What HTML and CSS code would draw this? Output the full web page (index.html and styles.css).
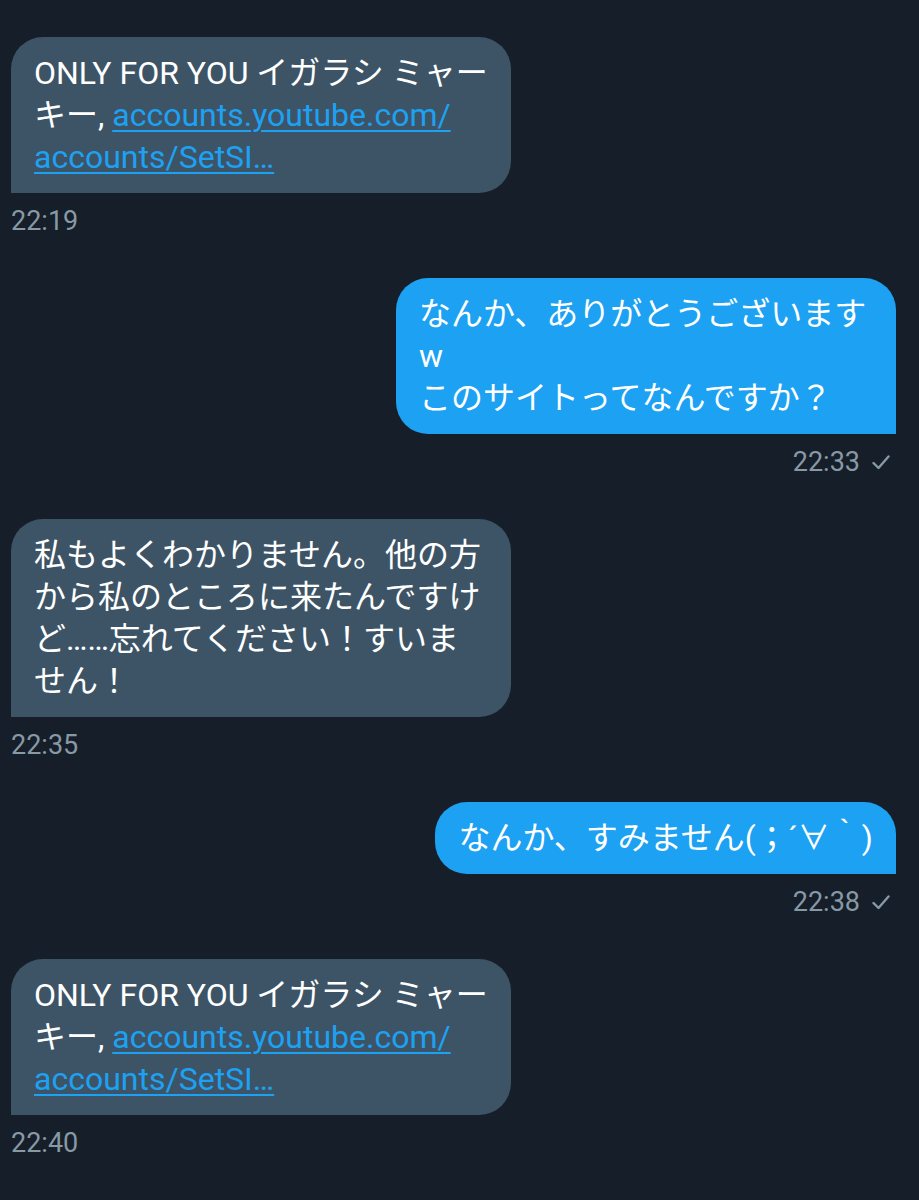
FILE: index.html
```html
<!DOCTYPE html>
<html lang="ja">
<head>
<meta charset="utf-8">
<link rel="stylesheet" href="styles.css">
</head>
<body>
<div class="chat">
  <div class="msg in">
    <div class="bubble">ONLY FOR YOU イガラシ ミャーキー, <a href="#">accounts.youtube.com/<wbr>accounts/SetSI…</a></div>
    <div class="meta">22:19</div>
  </div>
  <div class="msg out">
    <div class="bubble">なんか、ありがとうございますw<br>このサイトってなんですか？</div>
    <div class="meta">22:33 <svg class="check" viewBox="0 0 18 15" width="18" height="15"><path d="M1.5 8 L6.5 13 L16.5 1.5" fill="none" stroke="currentColor" stroke-width="2.4" stroke-linecap="round" stroke-linejoin="round"/></svg></div>
  </div>
  <div class="msg in">
    <div class="bubble">私もよくわかりません。他の方から私のところに来たんですけど……忘れてください！すいません！</div>
    <div class="meta">22:35</div>
  </div>
  <div class="msg out">
    <div class="bubble">なんか、すみません(；´∀｀)</div>
    <div class="meta">22:38 <svg class="check" viewBox="0 0 18 15" width="18" height="15"><path d="M1.5 8 L6.5 13 L16.5 1.5" fill="none" stroke="currentColor" stroke-width="2.4" stroke-linecap="round" stroke-linejoin="round"/></svg></div>
  </div>
  <div class="msg in">
    <div class="bubble">ONLY FOR YOU イガラシ ミャーキー, <a href="#">accounts.youtube.com/<wbr>accounts/SetSI…</a></div>
    <div class="meta">22:40</div>
  </div>
</div>
</body>
</html>
```
FILE: styles.css
```css
html, body {
  margin: 0;
  padding: 0;
  background: #151e29;
}
body {
  font-family: Roboto, "Noto Sans CJK JP", sans-serif;
  color: #ffffff;
}
.chat {
  display: flex;
  flex-direction: column;
  padding: 37px 23px 0 11px;
  gap: 42px;
}
.msg {
  display: flex;
  flex-direction: column;
  gap: 13px;
}
.msg.in { align-items: flex-start; }
.msg.out { align-items: flex-end; }
.bubble {
  box-sizing: border-box;
  max-width: 500px;
  padding: 15px 23px;
  font-size: 32px;
  line-height: 42px;
  border-radius: 32px;
}
.in .bubble {
  background: #3d5466;
  border-bottom-left-radius: 0;
  width: 500px;
}
.out .bubble {
  background: #1da1f2;
  border-bottom-right-radius: 0;
}
.bubble a {
  color: #1da1f2;
  text-decoration: underline;
  text-decoration-thickness: 2px;
  text-underline-offset: 4px;
}
.meta {
  font-size: 27px;
  line-height: 30px;
  color: #8899a6;
  display: flex;
  align-items: center;
  gap: 12px;
}
.out .meta { padding-right: 6px; }
.check {
  color: #8899a6;
  display: block;
}
```
